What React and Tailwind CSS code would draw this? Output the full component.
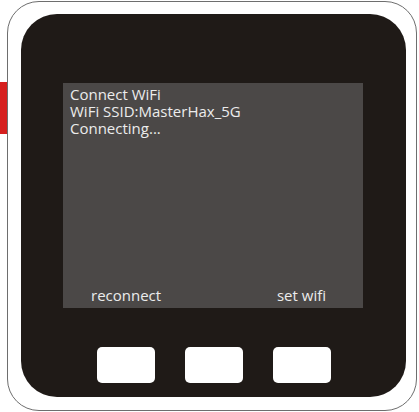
const Screen = () => (
  <div className="flex h-[225px] w-[300px] flex-col justify-between bg-[#4b4847] pb-[4px] pt-[3px] text-[15px] leading-[17px] text-[#ececec]">
    <div className="pl-[7px]">
      <div>Connect WiFi</div>
      <div>WiFi SSID:MasterHax_5G</div>
      <div>Connecting...</div>
    </div>
    <div className="flex justify-between pl-[28px] pr-[37px]">
      <span>reconnect</span>
      <span>set wifi</span>
    </div>
  </div>
);

const App = () => {
  return (
    <div className="flex h-[412px] w-[419px] items-start bg-white" style={{ fontFamily: '"Open Sans", "Noto Sans", sans-serif' }}>
      <div className="mt-[82px] h-[52px] w-[7px] bg-[#d6201f]" />
      <div className="mt-[1px] h-[410px] w-[410px] rounded-[32px] border border-[#6e6e6e] bg-white pb-[13px] pl-[13px] pr-[10px] pt-[12px]">
        <div className="flex h-full w-full flex-col items-center rounded-[36px] bg-[#1f1a17] pt-[69px]">
          <div className="ml-[-1px]">
            <Screen />
          </div>
          <div className="mt-[39px] flex gap-[30px]">
            <div className="h-[36px] w-[58px] rounded-[5px] bg-white" />
            <div className="h-[36px] w-[58px] rounded-[5px] bg-white" />
            <div className="h-[36px] w-[58px] rounded-[5px] bg-white" />
          </div>
        </div>
      </div>
    </div>
  );
};

export default App;
